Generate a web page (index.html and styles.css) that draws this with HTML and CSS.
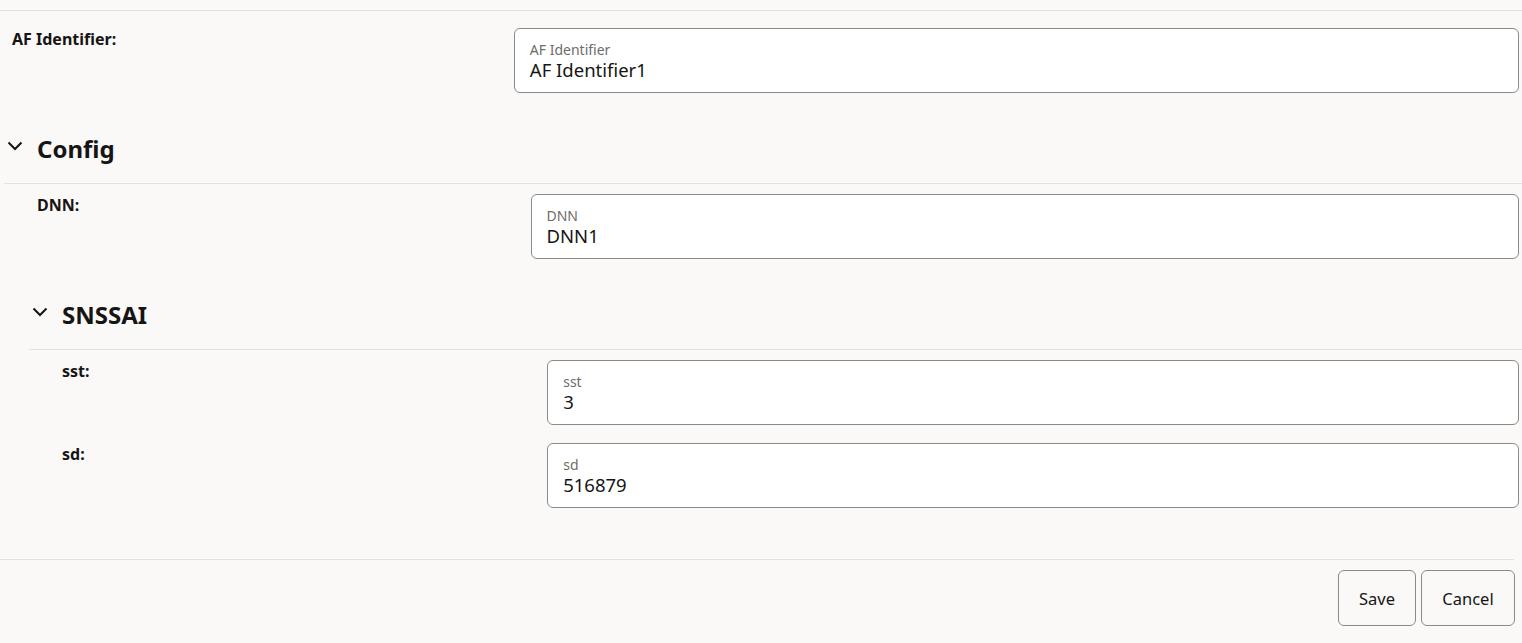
FILE: index.html
```html
<!DOCTYPE html>
<html lang="en">
<head>
<meta charset="utf-8">
<title>AF Config</title>
<link rel="stylesheet" href="styles.css">
</head>
<body>
<div class="page">
  <div class="topline"></div>
  <div class="form">
    <div class="row first">
      <div class="label">AF Identifier:</div>
      <div class="field">
        <div class="field-label">AF Identifier</div>
        <div class="field-value">AF Identifier1</div>
      </div>
    </div>

    <div class="section">
      <div class="section-head">
        <svg class="chev" width="16" height="10" viewBox="0 0 16 10"><polyline points="1.5,1.5 8,8 14.5,1.5" fill="none" stroke="#161513" stroke-width="2"/></svg>
        <span class="section-title">Config</span>
      </div>
      <div class="section-body">
        <div class="row after-line">
          <div class="label">DNN:</div>
          <div class="field">
            <div class="field-label">DNN</div>
            <div class="field-value">DNN1</div>
          </div>
        </div>

        <div class="section">
          <div class="section-head">
            <svg class="chev" width="16" height="10" viewBox="0 0 16 10"><polyline points="1.5,1.5 8,8 14.5,1.5" fill="none" stroke="#161513" stroke-width="2"/></svg>
            <span class="section-title">SNSSAI</span>
          </div>
          <div class="section-body">
            <div class="row after-line">
              <div class="label">sst:</div>
              <div class="field">
                <div class="field-label">sst</div>
                <div class="field-value">3</div>
              </div>
            </div>
            <div class="row">
              <div class="label">sd:</div>
              <div class="field">
                <div class="field-label">sd</div>
                <div class="field-value">516879</div>
              </div>
            </div>
          </div>
        </div>
      </div>
    </div>
  </div>
  <div class="footer">
    <button class="btn save">Save</button>
    <button class="btn cancel">Cancel</button>
  </div>
</div>
</body>
</html>
```

FILE: styles.css
```css
html, body {
  margin: 0;
  padding: 0;
  background: #faf9f8;
}
body {
  font-family: "Noto Sans", "Open Sans", sans-serif;
  color: #161513;
  height: 643px;
  overflow: hidden;
}
.page {
  padding-top: 10px;
}
.topline {
  border-top: 1px solid #e4e2df;
}
.form {
  padding-left: 4px;
}
.row {
  display: grid;
  grid-template-columns: 33.3% 1fr;
  padding-left: 8px;
  padding-right: 3px;
  margin-top: 18px;
}
.row.first {
  margin-top: 17px;
}
.row.after-line {
  margin-top: 10px;
}
.label {
  font-weight: 700;
  font-size: 16px;
  line-height: 22px;
  padding-top: 0;
}
.field {
  background: #ffffff;
  border: 1px solid #8b8a88;
  border-radius: 6px;
  height: 63px;
  box-sizing: content-box;
  padding: 0 15px;
}
.field-label {
  font-size: 14px;
  color: #6f6c68;
  line-height: 17px;
  margin-top: 12px;
}
.field-value {
  font-size: 18.5px;
  line-height: 24px;
  margin-top: 0;
}
.section-head {
  display: flex;
  align-items: center;
  height: 32px;
  margin-top: 40px;
  padding-left: 3px;
  padding-bottom: 18px;
  border-bottom: 1px solid #e4e2df;
}
.chev {
  display: block;
  margin-top: -6px;
}
.section-title {
  font-size: 24px;
  font-weight: 700;
  margin-left: 14px;
  line-height: 32px;
}
.section-body {
  padding-left: 25px;
}
.footer {
  margin-top: 51px;
  border-top: 1px solid #e4e2df;
  margin-right: 8px;
  padding-top: 10px;
  display: flex;
  justify-content: flex-end;
  gap: 5px;
}
.btn {
  font-family: "Noto Sans", "Open Sans", sans-serif;
  font-size: 16.5px;
  color: #161513;
  background: transparent;
  border: 1px solid #8b8a88;
  border-radius: 6px;
  height: 56px;
  padding: 0;
  margin: 0;
  cursor: pointer;
}
.btn.save {
  width: 78px;
}
.btn.cancel {
  width: 94px;
  margin-right: -1px;
}
```
